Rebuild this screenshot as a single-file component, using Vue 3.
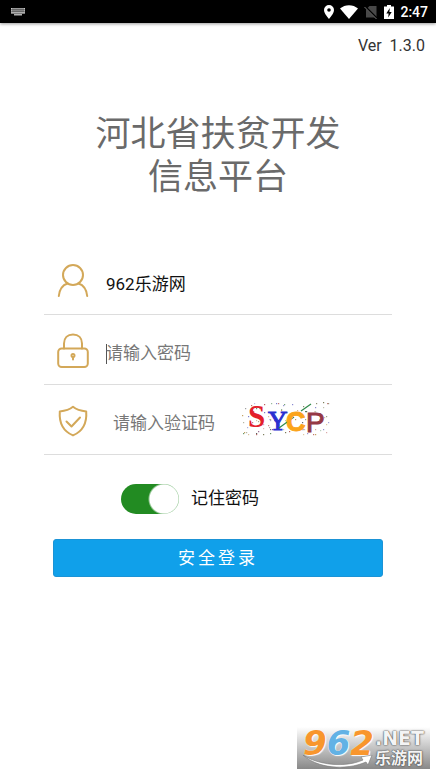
<script setup>
import { ref } from 'vue'

const username = ref('962乐游网')
const password = ref('')
const captcha = ref('')
const remember = ref(true)

const noiseColors = ['#3f7d45', '#4a4ab8', '#b04a4a', '#6b6b45', '#3c3c3c', '#b58a3a']
let seed = 41
const random = () => {
  seed = (seed * 16807) % 2147483647
  return seed / 2147483647
}
const noise = Array.from({ length: 95 }, () => ({
  x: Math.round(random() * 86),
  y: Math.round(random() * 33),
  color: noiseColors[Math.floor(random() * 6)],
  o: 0.3 + random() * 0.6
}))
</script>

<template>
  <div class="page">
    <header class="status">
      <svg class="keyboard" viewBox="0 0 14 8" aria-hidden="true">
        <rect width="14" height="5.6" fill="#ccc" />
        <path d="M0 1.8H14M0 3.8H14M2 0V4M4 0V4M6 0V4M8 0V4M10 0V4M12 0V4" stroke="#222" stroke-width=".6" />
        <path d="M3 6.8H11" stroke="#ddd" stroke-width="1.2" />
      </svg>
      <div class="status-right">
        <svg class="pin" viewBox="0 0 10 14" aria-hidden="true">
          <path fill="#fff" fill-rule="evenodd" d="M5 0a5 5 0 0 0-5 5c0 3.6 5 9 5 9s5-5.400 5-9a5 5 0 0 0-5-5Zm0 3.200a1.800 1.800 0 1 1 0 3.600 1.800 1.800 0 0 1 0-3.600Z" />
        </svg>
        <svg class="wifi" viewBox="0 0 18 14" aria-hidden="true">
          <path fill="#fff" d="M0 3.500C5-1 13-1 18 3.500L9 14Z" />
        </svg>
        <svg class="sim" viewBox="0 0 14 14" aria-hidden="true">
          <path fill="#484848" d="M5.500 1H12.500V12.500H2V4.500Z" />
          <path d="M1 1.500 13 13.500" stroke="#000" stroke-width="2" />
          <path d="M.5 2 12.500 14" stroke="#777" stroke-width="1" />
        </svg>
        <svg class="battery" viewBox="0 0 10 14" aria-hidden="true">
          <path fill="#fff" d="M3 0H7V1.500H10V14H0V1.500H3Z" />
          <path fill="#000" d="M5.800 3 2.300 8.400H4.600L4.200 12.500 7.700 7H5.400Z" />
        </svg>
        <span class="clock">2:47</span>
      </div>
    </header>

    <div class="version">Ver&nbsp; 1.3.0</div>

    <main>
      <h1>河北省扶贫开发<br />信息平台</h1>

      <form @submit.prevent>
        <div class="field">
          <label for="user" aria-label="用户名">
            <svg class="icon" viewBox="0 0 32 36">
              <circle cx="16" cy="12" r="10" />
              <path d="M1.800 33C2.500 26 6 22 10.500 20.500M21.500 20.500C26 22 29.500 26 30.200 33" />
            </svg>
          </label>
          <input id="user" v-model="username" type="text" />
        </div>
        <div class="field">
          <label for="pass" aria-label="密码">
            <svg class="icon" viewBox="0 0 32 36">
              <rect x="1.200" y="15.500" width="29.600" height="18.500" rx="3.500" />
              <path d="M7 15.500V10.500C7 5 10.500 1.500 16 1.500S25 5 25 10.500V15.500" />
              <circle cx="16" cy="22.500" r="1.500" />
              <path d="M16 24V26.500" />
            </svg>
          </label>
          <input id="pass" v-model="password" class="active" type="password" placeholder="请输入密码" />
        </div>
        <div class="field">
          <label for="code" aria-label="验证码">
            <svg class="icon" viewBox="0 0 32 36">
              <path d="M16 3.800C12.500 6.800 8 8 2.800 8.400C2 19.500 5.500 28 16 32.400C26.500 28 30 19.500 29.200 8.400C24 8 19.500 6.800 16 3.800Z" />
              <path d="M9.500 18.500 14.500 23.500 23 14.500" />
            </svg>
          </label>
          <input id="code" v-model="captcha" class="code" type="text" placeholder="请输入验证码" />
          <svg class="captcha" viewBox="0 0 88 36" role="img" aria-label="SYCP">
            <rect v-for="(n, i) in noise" :key="i" :x="n.x" :y="n.y" width="1.200" height="1.200" :fill="n.color" :opacity="n.o" />
            <text class="serif" x="6" y="25" font-size="31" fill="#e3202b">S</text>
            <text class="serif thin" x="26" y="28" font-size="27" fill="#2a2fd0">Y</text>
            <path d="M37 26 52 15" stroke="#2f8a4a" stroke-width="1.200" />
            <text class="sans heavy" x="44" y="29" font-size="27" fill="#fba41a" stroke="#fba41a">C</text>
            <text class="sans" x="64" y="30" font-size="28" fill="#953845" stroke="#953845">P</text>
            <path d="M59 9 69 2" stroke="#2f8a4a" stroke-width="1.200" />
          </svg>
        </div>

        <label class="remember">
          <input v-model="remember" type="checkbox" />
          <span>记住密码</span>
        </label>

        <button type="submit">安全登录</button>
      </form>
    </main>

    <footer>
      <div class="mark">
        <span class="digits"><i>9</i><i class="blue">6</i><i>2</i></span>
        <svg class="swoosh" viewBox="0 0 70 14" aria-hidden="true">
          <path d="M0 0C15 10 42 13 60 5L58 2 69 0 65 10 63 7C42 16 14 13 0 0Z" fill="#fff" stroke="#777" stroke-width=".6" />
        </svg>
        <div class="names">
          <span class="net">.NET</span>
          <span class="cn">乐游网</span>
        </div>
      </div>
    </footer>
  </div>
</template>

<style>
body {
  background: #fff;
}
</style>

<style scoped>
.page {
  display: flex;
  flex-direction: column;
  min-height: 100vh;
  font-family: Roboto, "Noto Sans CJK SC", sans-serif;
  color: #111;
}
.status {
  display: flex;
  align-items: center;
  justify-content: space-between;
  height: 23px;
  padding: 0 8px 0 11px;
  background: #000;
  box-shadow: 0 1px 3px #0006;
}
.keyboard { width: 14px; height: 8px; }
.status-right { display: flex; align-items: center; gap: 7px; }
.pin, .battery { width: 10px; height: 14px; }
.wifi { width: 18px; height: 14px; }
.sim { width: 14px; height: 14px; }
.status-right { gap: 6px; }
.clock { color: #fff; font-size: 14px; line-height: 22px; font-weight: 500; }
.version {
  padding: 12px 11px 0;
  text-align: right;
  font-size: 16px;
  line-height: 22px;
  color: #333;
}
main { padding: 0 44px; }
h1 {
  margin: 56px 0 0;
  text-align: center;
  font-size: 35px;
  line-height: 43px;
  font-weight: 400;
  color: #6a6a6a;
}
form { margin-top: 46px; }
.field {
  display: flex;
  align-items: center;
  height: 69px;
  padding-left: 13px;
  border-bottom: 1px solid #ddd;
}
.field label { display: flex; padding-top: 2px; }
.icon {
  width: 32px;
  height: 36px;
  fill: none;
  stroke: #d3a859;
  stroke-width: 2;
  stroke-linecap: round;
  stroke-linejoin: round;
}
.field input {
  flex: 1;
  min-width: 0;
  height: 32px;
  margin-left: 17px;
  padding: 6px 0 0;
  border: 0;
  outline: 0;
  background: none;
  font: inherit;
  font-size: 17px;
  color: #111;
}
.field input::placeholder { color: #777; opacity: 1; }
.field input.active {
  background: linear-gradient(#555, #555) 0 75% / 1px 20px no-repeat;
}
.field input.code { margin-left: 24px; }
.captcha { width: 88px; height: 36px; margin-right: 62px; overflow: visible; }
.serif { font-family: "Liberation Serif", serif; font-weight: 700; }
.thin { font-weight: 400; stroke: #2a2fd0; stroke-width: 1; }
.sans { font-family: "Liberation Sans", sans-serif; stroke-width: 1; }
.heavy { font-weight: 700; }
.remember {
  display: flex;
  align-items: center;
  gap: 12px;
  width: fit-content;
  margin: 29px auto 0 77px;
  font-size: 17px;
  line-height: 28px;
}
.remember span { padding-bottom: 2px; }
.remember input {
  appearance: none;
  width: 58px;
  height: 30px;
  margin: 0;
  border-radius: 15px;
  background: #ddd;
}
.remember input:checked {
  background: radial-gradient(circle at 43px 15px, #fff 14px, #228b22 16px);
}
button {
  display: block;
  width: calc(100% - 18px);
  height: 38px;
  margin: 25px auto 0;
  padding: 0 0 4px;
  border: 1px solid #1b93d6;
  border-radius: 3px;
  background: #10a0ea;
  color: #fff;
  font: inherit;
  font-size: 17px;
  letter-spacing: 3px;
}
footer {
  display: flex;
  justify-content: flex-end;
  margin-top: auto;
  padding: 0 6px 6px;
}
.mark {
  position: relative;
  display: flex;
  width: 133px;
  height: 42px;
  background: linear-gradient(#fff, #888);
}
.digits {
  width: 72px;
  padding-left: 6px;
  font: 700 34px/32px "DejaVu Sans", sans-serif;
  color: #f8962d;
  white-space: nowrap;
  text-shadow: 0 0 1px #fff, 1px 1px 1px #fff;
}
.digits i { font-style: oblique; }
.digits .blue { color: #62b2e5; }
.swoosh { position: absolute; left: 6px; bottom: 0; width: 70px; height: 14px; }
.names {
  display: flex;
  flex-direction: column;
  color: #f4f4f4;
  text-shadow: 0 0 2px #444, 0 0 1px #444;
  white-space: nowrap;
}
.net { font: 700 19px/22px "DejaVu Sans", sans-serif; }
.cn { font-size: 16px; line-height: 20px; font-weight: 700; }
</style>
